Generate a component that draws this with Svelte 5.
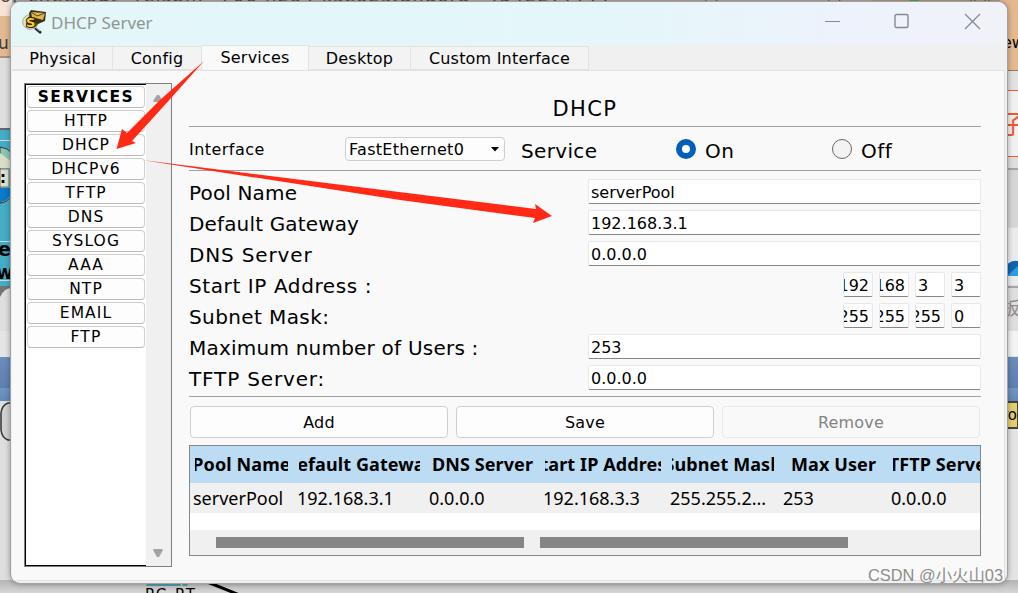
<script lang="ts">
    type Octets = string[];

    const tabs = [
        { name: 'Physical', width: 100 },
        { name: 'Config', width: 89 },
        { name: 'Services', width: 107 },
        { name: 'Desktop', width: 102 },
        { name: 'Custom Interface', width: 178 }
    ];
    let activeTab = $state('Services');

    const services = ['HTTP', 'DHCP', 'DHCPv6', 'TFTP', 'DNS', 'SYSLOG', 'AAA', 'NTP', 'EMAIL', 'FTP'];

    let serviceOn = $state(true);

    let fields: { label: string; value: string | Octets; tracking: number }[] = $state([
        { label: 'Pool Name', value: 'serverPool', tracking: 0.15 },
        { label: 'Default Gateway', value: '192.168.3.1', tracking: 0.15 },
        { label: 'DNS Server', value: '0.0.0.0', tracking: 0.85 },
        { label: 'Start IP Address :', value: ['192', '168', '3', '3'], tracking: 0.6 },
        { label: 'Subnet Mask:', value: ['255', '255', '255', '0'], tracking: 0.4 },
        { label: 'Maximum number of Users :', value: '253', tracking: 0.22 },
        { label: 'TFTP Server:', value: '0.0.0.0', tracking: 0.85 }
    ]);

    const columns = [
        { title: 'Pool Name', value: 'serverPool', width: 104 },
        { title: 'Default Gateway', value: '192.168.3.1', width: 132 },
        { title: 'DNS Server', value: '0.0.0.0', width: 114 },
        { title: 'Start IP Address', value: '192.168.3.3', width: 127 },
        { title: 'Subnet Mask', value: '255.255.2...', width: 113 },
        { title: 'Max User', value: '253', width: 108 },
        { title: 'TFTP Server', value: '0.0.0.0', width: 108 }
    ];
</script>

<div class="desktop">
    <svg class="backdrop" width="1018" height="593" viewBox="0 0 1018 593">
        <defs>
            <linearGradient id="floor" x1="0" y1="0" x2="0" y2="1">
                <stop offset="0" stop-color="#b4b4b4" />
                <stop offset="1" stop-color="#d6d6d6" />
            </linearGradient>
            <linearGradient id="blue" x1="0" y1="0" x2="0" y2="1">
                <stop offset="0" stop-color="#6b8dbb" />
                <stop offset="0.7" stop-color="#5f7fb0" />
                <stop offset="0.7" stop-color="#7096c4" />
                <stop offset="1" stop-color="#6288b5" />
            </linearGradient>
        </defs>
        <rect width="1018" height="593" fill="#dedede" />
        <!-- left edge -->
        <rect width="12" height="16" fill="#f8e4d6" />
        <rect y="16" width="12" height="40" fill="#e3b994" />
        <rect y="56" width="12" height="2" fill="#a9917d" />
        <text x="-2" y="49" font-size="17" fill="#443a33">ub</text>
        <rect y="128" width="12" height="2" fill="#5e6870" />
        <rect y="130" width="12" height="156" fill="#45acc6" />
        <rect y="140" width="12" height="1" fill="#c5e2e8" />
        <path d="M0 147q8 1 12 6v42q-5 8-12 8z" fill="#8cc5b2" stroke="#333" />
        <path d="M0 153l12 9v6H0z" fill="#d8dec6" />
        <rect y="169" width="9" height="18" fill="#dfe1d3" stroke="#67756b" />
        <path d="M0 188h12v4q-4 10-12 10z" fill="#0b78c8" />
        <text x="0" y="183" font-size="15" font-weight="bold">:</text>
        <text x="-2" y="256" font-size="19" font-weight="bold">e</text>
        <text x="-4" y="279" font-size="19" font-weight="bold">w</text>
        <rect y="241" width="12" height="1" fill="#c5e2e8" />
        <rect y="280" width="12" height="1" fill="#c5e2e8" />
        <path d="M0 286h12v2q-8 0-12 9z" fill="#747474" />
        <rect y="331" width="12" height="26" fill="#e5e5e5" />
        <rect y="357" width="12" height="44" fill="url(#blue)" />
        <path d="M12 403H8q-6 2-7 10v17q1 8 7 10h4" fill="#d2d2d2" stroke="#333" stroke-width="1.5" />
        <!-- top edge -->
        <rect x="12" width="860" height="3" fill="#b9aea4" />
        <rect x="872" width="146" height="3" fill="#bd9f83" />
        <text x="0" y="2" font-size="18" fill="#514b47" textLength="612">or checkout &quot;relspm&quot; 706 h2o4 kseo2standord &quot;4542277777</text>
        <path d="M705 2q0-3 6-3t7 3M828 2q0-3 6-3t7 3M970 2l3-4 3 4M984 2l3-4 3 4" fill="none" stroke="#554b43" />
        <circle cx="914" cy="-3" r="6" fill="#58a65c" />
        <!-- right edge -->
        <rect x="1000" width="18" height="70" fill="#e5b98f" />
        <rect x="1000" y="70" width="18" height="1" fill="#8e7a6a" />
        <text x="1002" y="48" font-size="16">ew</text>
        <rect x="1000" y="71" width="18" height="19" fill="#e2e2e2" />
        <rect x="1000" y="90" width="18" height="67" fill="#f1f1f1" />
        <path d="M1000 90.500h18M1000 156.500h18" stroke="#ee5a35" />
        <text x="1000" y="134" font-size="26" fill="#ee5a35">子</text>
        <rect x="1000" y="168" width="18" height="2" fill="#a5a5a5" />
        <rect x="1000" y="170" width="18" height="57" fill="#d6d6d6" />
        <rect x="1000" y="228" width="18" height="57" fill="#ebebeb" />
        <path d="M1000 276V268q5-2 9-5 4-3 9-2v15z" fill="#0e64b1" />
        <path d="M1007 276l11-10v10z" fill="#2a9fe0" />
        <rect x="1000" y="286" width="18" height="2" fill="#a5a5a5" />
        <text x="1002" y="315" font-size="18" fill="#8c8c8c">板</text>
        <rect x="1000" y="331" width="18" height="25" fill="#f3f3f3" />
        <rect x="1000" y="357" width="18" height="44" fill="url(#blue)" />
        <rect x="1000" y="402" width="18" height="26" fill="#e6ce6b" stroke="#444" stroke-width="2" />
        <text x="1002" y="420" font-size="15">ro</text>
        <rect x="1000" y="430" width="18" height="163" fill="#e4e4e4" />
        <!-- bottom edge -->
        <rect y="580" width="1018" height="13" fill="url(#floor)" />
        <path d="M146 586l3-6h34l-3 6zM182 586l3-6h5l-3 6z" fill="#549cab" />
        <circle cx="197" cy="580" r="3" fill="#3cd43c" />
        <path d="M200 579l42 17" stroke="#000" stroke-width="3" />
        <text x="145" y="600" font-size="15" textLength="50">PC-PT</text>
    </svg>

    <div class="window">
        <header class="title-bar">
            <svg class="app-icon" width="24" height="24" viewBox="0 0 24 24">
                <circle cx="8" cy="12" r="7.300" fill="#dfe3d4" stroke="#a3a79b" />
                <path d="M6 7q8-4 11 3 0 7-7 8-4-3-4-11z" fill="#3f6b2a" />
                <path d="M7 3l2-3 15 2-1 9-7 3-8-4z" fill="#3a3014" />
                <path d="M9 2l14 1-2 7-11-3z" fill="#e0b652" />
                <path d="M9 2l6 4 8-3" fill="none" stroke="#5b4310" />
                <path d="M13 18l6 5" stroke="#222" stroke-width="2.500" />
                <path d="M13 17l5 4" stroke="#ccc" />
                <text class="app-letter" x="4" y="16.500">S</text>
            </svg>
            <h1>DHCP Server</h1>
            <svg class="controls" width="160" height="18" viewBox="0 0 160 18">
                <path d="M1 8.500h15" stroke="#858a8e" />
                <rect x="71" y="1.500" width="13" height="13" rx="1.500" fill="none" stroke="#858a8e" stroke-width="1.400" />
                <path d="M141 1l15 15M156 1l-15 15" stroke="#858a8e" stroke-width="1.300" />
            </svg>
        </header>

        <nav class="tabs">
            {#each tabs as tab}
                <button
                    class="tab"
                    class:active={activeTab === tab.name}
                    style="width: {tab.width}px"
                    onclick={() => (activeTab = tab.name)}
                >
                    {tab.name}
                </button>
            {/each}
        </nav>

        <div class="pane">
            <aside class="sidebar">
                <div class="service-list">
                    <button class="service heading">SERVICES</button>
                    {#each services as service}
                        <button class="service">{service}</button>
                    {/each}
                </div>
                <div class="scroll-track">
                    <svg width="12" height="9" viewBox="0 0 12 9"><path d="M5 1h2l4 6-1 1H2L1 7z" fill="#a3a3a3" /></svg>
                    <svg width="12" height="9" viewBox="0 0 12 9"><path d="M2 0h8l1 1-4 7H5L1 1z" fill="#a3a3a3" /></svg>
                </div>
            </aside>

            <main>
                <h2>DHCP</h2>

                <div class="service-row">
                    <span class="interface-label">Interface</span>
                    <button class="select">
                        FastEthernet0
                        <svg width="8" height="5" viewBox="0 0 8 5"><path d="M0 0h8L4 4.500z" /></svg>
                    </button>
                    <span class="service-label">Service</span>
                    <label class="radio on">
                        <input type="radio" name="service" checked={serviceOn} onchange={() => (serviceOn = true)} />
                        <span>On</span>
                    </label>
                    <label class="radio">
                        <input type="radio" name="service" checked={!serviceOn} onchange={() => (serviceOn = false)} />
                        <span>Off</span>
                    </label>
                </div>

                <div class="fields">
                    {#each fields as field}
                        <div class="field">
                            <span style="letter-spacing: {field.tracking}px">{field.label}</span>
                            {#if typeof field.value === 'string'}
                                <div class="input">{field.value}</div>
                            {:else}
                                <div class="octets">
                                    {#each field.value as octet}
                                        <div class="input octet" class:overflowing={octet.length > 2}>
                                            <span>{octet}</span>
                                        </div>
                                    {/each}
                                </div>
                            {/if}
                        </div>
                    {/each}
                </div>

                <div class="actions">
                    <button>Add</button>
                    <button>Save</button>
                    <button disabled>Remove</button>
                </div>

                <div class="table">
                    <div class="table-row table-head">
                        {#each columns as column}
                            <div class="cell" style="width: {column.width}px"><b>{column.title}</b></div>
                        {/each}
                    </div>
                    <div class="table-row">
                        {#each columns as column}
                            <div class="cell" style="width: {column.width}px">{column.value}</div>
                        {/each}
                    </div>
                    <div class="table-scroll"><i></i><i></i></div>
                </div>
            </main>
        </div>
    </div>

    <svg class="arrows" width="1018" height="593" viewBox="0 0 1018 593">
        <path d="M204 61L172 97L132 141L136 143L116.500 149L122 129L127 133L160 100z" fill="#ff2a16" />
        <path d="M142 160L536 209L535 204L552 216L533 223L535 218L400 200z" fill="#ff2a16" />
    </svg>
    <div class="watermark">CSDN @小火山03</div>
</div>

<style>
    :global(body) {
        margin: 0;
        overflow: hidden;
    }

    .desktop {
        position: relative;
        width: 1018px;
        height: 593px;
        overflow: hidden;
        box-sizing: border-box;
        padding: 2px 0 0 11px;
        font-family: 'DejaVu Sans', 'Noto Sans CJK SC', sans-serif;
        color: #000;
    }

    .desktop * {
        box-sizing: border-box;
    }

    .backdrop,
    .arrows {
        position: absolute;
        left: 0;
        top: 0;
        pointer-events: none;
    }

    svg {
        display: block;
    }

    button {
        font: inherit;
        color: inherit;
        padding: 0;
        white-space: nowrap;
    }

    .window {
        position: relative;
        width: 996px;
        height: 581px;
        border-radius: 9px;
        overflow: hidden;
        background: #f0f0f0;
        box-shadow:
            0 0 0 1px #a2a2a2,
            0 0 6px rgba(0, 0, 0, 0.45);
    }

    .title-bar {
        display: flex;
        align-items: center;
        height: 43px;
        padding: 0 0 3px 11px;
        background: linear-gradient(90deg, #e5f6f7, #e3f7f8 35%, #e6f6f8 64%, #edf2fc 83%, #f1f2f8);
    }

    .app-letter {
        font-size: 13px;
        font-weight: bold;
        fill: #ffd21c;
        stroke: #2a2405;
        stroke-width: 2px;
        paint-order: stroke;
    }

    h1 {
        margin: 0 0 0 5px;
        font: 17px 'Noto Sans', sans-serif;
        color: #8f9595;
    }

    .controls {
        margin-left: auto;
        margin-right: 23px;
    }

    .tabs {
        display: flex;
        align-items: flex-end;
        height: 25px;
        padding-left: 2px;
        font-size: 16px;
    }

    .tab {
        height: 24px;
        padding-top: 1px;
        background: #f3f3f3;
        border: 1px solid #e3e3e3;
        border-left: none;
        letter-spacing: 0.2px;
    }

    .tab.active {
        height: 25px;
        padding: 0 0 1px;
        background: #f9f9f9;
        border-bottom: none;
    }

    .pane {
        display: flex;
        height: 511px;
        margin: 0 2px 0 1px;
        padding: 12px 0 0 12px;
        background: #f9f9f9;
        border: 1px solid #e2e2e2;
        border-left: none;
    }

    .sidebar {
        display: flex;
        flex: none;
        width: 148px;
        height: 484px;
        border: 1px solid #7b7f8a;
        background: #f0f0f0;
    }

    .service-list {
        display: flex;
        flex-direction: column;
        gap: 2px;
        width: 121px;
        padding: 1px 1px 0 1px;
        background: #fff;
        border: 1px solid #000;
        border-right: none;
    }

    .service {
        flex: none;
        height: 22px;
        padding-top: 1px;
        border: 1px solid #cfcfcf;
        border-bottom-color: #bbb;
        border-radius: 4px;
        background: #fdfdfd;
        font-size: 15.5px;
        line-height: 19px;
        letter-spacing: 1.1px;
    }

    .service.heading {
        font-weight: bold;
        letter-spacing: 1.5px;
    }

    .scroll-track {
        display: flex;
        flex: 1;
        flex-direction: column;
        align-items: center;
        justify-content: space-between;
        padding: 10px 1px 8px 0;
    }

    main {
        width: 792px;
        margin-left: 17px;
    }

    h2 {
        height: 44px;
        margin: 0;
        border-bottom: 1px solid #a0a0a0;
        font-size: 21px;
        font-weight: normal;
        line-height: 52px;
        letter-spacing: 1.4px;
        text-align: center;
    }

    .service-row {
        display: flex;
        align-items: center;
        height: 44px;
        border-bottom: 1px solid #a0a0a0;
        font-size: 20px;
    }

    .interface-label {
        width: 156px;
        padding-top: 2px;
        font-size: 16px;
        letter-spacing: 0.45px;
    }

    .select {
        display: flex;
        align-items: center;
        justify-content: space-between;
        width: 160px;
        height: 24px;
        padding: 1px 5px 0 3px;
        border: 1px solid #cfcfcf;
        border-radius: 4px;
        background: #fdfdfd;
        font-size: 16px;
        letter-spacing: 0.3px;
    }

    .service-label {
        width: 155px;
        margin-left: 16px;
        padding-top: 4px;
        letter-spacing: 0.35px;
    }

    .radio {
        display: flex;
        align-items: center;
        gap: 9px;
    }

    .radio.on {
        width: 156px;
    }

    .radio span {
        padding-top: 4px;
        letter-spacing: 0.5px;
    }

    .radio input {
        appearance: none;
        width: 20px;
        height: 20px;
        margin: 0;
        border: 1px solid #666;
        border-radius: 50%;
        background: #f3f3f3;
    }

    .radio input:checked {
        border: 6px solid #005fb8;
        background: #fff;
    }

    .fields {
        display: flex;
        flex-direction: column;
        gap: 6px;
        padding: 8px 0 6px;
    }

    .field {
        display: flex;
        justify-content: space-between;
        height: 25px;
        font-size: 20px;
        line-height: 28px;
    }

    .input {
        width: 393px;
        padding-left: 2px;
        background: #fff;
        border: 1px solid #e8e8e8;
        border-bottom-color: #868686;
        border-radius: 2px;
        font-size: 16px;
        line-height: 25px;
    }

    .octets {
        display: flex;
        gap: 6px;
    }

    .input.octet {
        display: flex;
        width: 30px;
        overflow: hidden;
    }

    .input.octet.overflowing {
        justify-content: flex-end;
        padding: 0 3px 0 0;
    }

    .actions {
        display: flex;
        gap: 8px;
        padding: 9px 1px 7px;
        border-top: 1px solid #a0a0a0;
    }

    .actions button {
        flex: 1;
        height: 32px;
        border: 1px solid #cfcfcf;
        border-radius: 4px;
        background: #fdfdfd;
        font-size: 16px;
        letter-spacing: 0.2px;
    }

    .actions button:disabled {
        background: #f9f9f9;
        border-color: #e8e8e8;
        color: #838383;
    }

    .table {
        display: flex;
        flex-direction: column;
        height: 111px;
        overflow: hidden;
        background: #fff;
        border: 1px solid #828790;
        font-family: 'Noto Sans', sans-serif;
        font-size: 18px;
    }

    .table-row {
        display: flex;
        flex: none;
        height: 30px;
        background: #f0f0f0;
        line-height: 30px;
        white-space: nowrap;
    }

    .cell {
        flex: none;
        padding-left: 3px;
    }

    .table-head {
        height: 37px;
        background: #bbdcf3;
        line-height: 36px;
    }

    .table-head .cell {
        padding: 0 6px 0 5px;
    }

    .table-head b {
        display: flex;
        justify-content: center;
        overflow: hidden;
        letter-spacing: 0.1px;
    }

    .table-scroll {
        display: flex;
        gap: 16px;
        height: 25px;
        margin-top: auto;
        padding: 7px 0 7px 26px;
        background: #f0f0f0;
    }

    .table-scroll i {
        width: 308px;
        background: #858585;
    }

    .watermark {
        position: absolute;
        left: 868px;
        top: 563px;
        font: 16.4px/24px 'Liberation Sans', 'Noto Sans CJK SC', sans-serif;
        color: #8c8c8c;
        white-space: nowrap;
    }
</style>
